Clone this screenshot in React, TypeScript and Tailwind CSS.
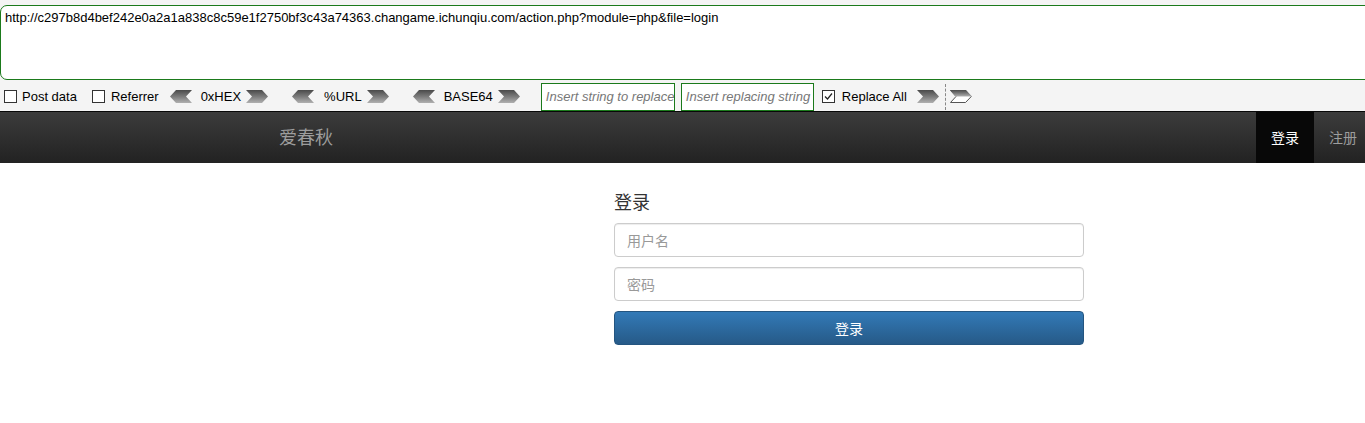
import { useState } from "react";

const ArrowLeft = () => (
  <svg width="22" height="13" viewBox="0 0 22 13" className="shrink-0">
    <defs>
      <linearGradient id="gl" x1="0" y1="0" x2="0" y2="1">
        <stop offset="0" stopColor="#4a4a4a" />
        <stop offset="0.5" stopColor="#7a7a7a" />
        <stop offset="1" stopColor="#b0b0b0" />
      </linearGradient>
    </defs>
    <polygon points="0,6.5 6,0 22,0 16,6.5 22,13 6,13" fill="url(#gl)" />
  </svg>
);

const ArrowRight = ({ hollow = false }: { hollow?: boolean }) => (
  <svg width="22" height="13" viewBox="0 0 22 13" className="shrink-0">
    <defs>
      <linearGradient id="gr" x1="0" y1="0" x2="0" y2="1">
        <stop offset="0" stopColor="#4a4a4a" />
        <stop offset="0.5" stopColor="#7a7a7a" />
        <stop offset="1" stopColor="#b0b0b0" />
      </linearGradient>
    </defs>
    {hollow ? (
      <>
        <polygon points="0.5,0.5 15.5,0.5 21.3,6.5 15.5,12.5 0.5,12.5 6,6.5" fill="white" stroke="#555" strokeWidth="1" />
        <polygon points="0,0 16,0 22,6.5 6,6.5" fill="url(#gr)" />
      </>
    ) : (
      <polygon points="0,0 16,0 22,6.5 16,13 0,13 6,6.5" fill="url(#gr)" />
    )}
  </svg>
);

const Box = ({ checked = false }: { checked?: boolean }) => (
  <span className="w-[13px] h-[13px] border border-[#333] bg-white flex items-center justify-center shrink-0">
    {checked && (
      <svg width="9" height="9" viewBox="0 0 9 9">
        <path d="M1 4.5 L3.5 7 L8 1.5" fill="none" stroke="#222" strokeWidth="1.2" />
      </svg>
    )}
  </span>
);

export default function App() {
  const [user, setUser] = useState("");
  const [pass, setPass] = useState("");

  return (
    <div className="min-h-[423px] bg-white font-['Noto_Sans','Noto_Sans_CJK_SC',sans-serif] overflow-hidden">
      {/* hackbar */}
      <div className="bg-[#f4f4f4] h-[111px] pt-[5px] text-[13px] text-black font-['Liberation_Sans','Noto_Sans_CJK_SC',sans-serif]">
        <div className="h-[75px] mr-[-10px] border border-[#1b7a1b] rounded-l-[7px] bg-white px-[4px] pt-[3px] leading-[17px]">
          http://c297b8d4bef242e0a2a1a838c8c59e1f2750bf3c43a74363.changame.ichunqiu.com/action.php?module=php&amp;file=login
        </div>
        <div className="flex items-center h-[31px] pl-[4px] pt-[2px] whitespace-nowrap">
          <Box />
          <span className="ml-[5px]">Post data</span>
          <span className="ml-[15px]"><Box /></span>
          <span className="ml-[6px]">Referrer</span>
          <span className="ml-[11px]"><ArrowLeft /></span>
          <span className="ml-[9px]">0xHEX</span>
          <span className="ml-[5px]"><ArrowRight /></span>
          <span className="ml-[24px]"><ArrowLeft /></span>
          <span className="ml-[10px]">%URL</span>
          <span className="ml-[5px]"><ArrowRight /></span>
          <span className="ml-[24px]"><ArrowLeft /></span>
          <span className="ml-[9px]">BASE64</span>
          <span className="ml-[5px]"><ArrowRight /></span>
          <div className="ml-[21px] w-[134px] h-[28px] border border-[#1b7a1b] bg-white px-[4px] flex items-center overflow-hidden italic text-[#777]">
            Insert string to replace
          </div>
          <div className="ml-[6px] w-[133px] h-[28px] border border-[#1b7a1b] bg-white px-[4px] flex items-center overflow-hidden italic text-[#777]">
            Insert replacing string
          </div>
          <span className="ml-[8px]"><Box checked /></span>
          <span className="ml-[7px]">Replace All</span>
          <span className="ml-[10px]"><ArrowRight /></span>
          <span className="ml-[6px] h-[26px] border-l border-dashed border-[#888]" />
          <span className="ml-[4px]"><ArrowRight hollow /></span>
        </div>
      </div>

      {/* navbar */}
      <nav className="h-[52px] border-t border-[#080808] bg-gradient-to-b from-[#3c3c3c] to-[#222] flex items-stretch">
        <a className="ml-[279px] flex items-center text-[18px] text-[#9d9d9d]">爱春秋</a>
        <div className="ml-auto mr-[-7px] flex items-stretch text-[14px]">
          <a className="px-[15px] flex items-center bg-[#080808] text-white">登录</a>
          <a className="px-[15px] flex items-center text-[#9d9d9d]">注册</a>
        </div>
      </nav>

      {/* login form */}
      <div className="ml-[614px] w-[470px] pt-[26px] text-[14px] text-[#333]">
        <h2 className="text-[18px] leading-[26px] mb-[8px]">登录</h2>
        <input
          value={user}
          onChange={(e) => setUser(e.target.value)}
          placeholder="用户名"
          className="block w-full h-[34px] px-[12px] border border-[#ccc] rounded-[4px] shadow-[inset_0_1px_1px_rgba(0,0,0,0.075)] placeholder:text-[#999] outline-none"
        />
        <input
          type="password"
          value={pass}
          onChange={(e) => setPass(e.target.value)}
          placeholder="密码"
          className="block w-full h-[34px] mt-[10px] px-[12px] border border-[#ccc] rounded-[4px] shadow-[inset_0_1px_1px_rgba(0,0,0,0.075)] placeholder:text-[#999] outline-none"
        />
        <button className="block w-full h-[34px] mt-[10px] rounded-[4px] border border-[#245580] bg-gradient-to-b from-[#337ab7] to-[#265a88] text-white text-[14px]">
          登录
        </button>
      </div>
    </div>
  );
}
